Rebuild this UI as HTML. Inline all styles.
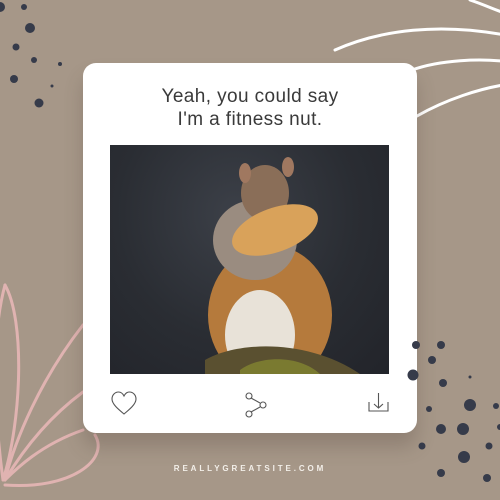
<!DOCTYPE html>
<html><head><style>
body{margin:0;width:500px;height:500px;background:#a69788;position:relative;overflow:hidden;font-family:"Liberation Sans",sans-serif}
svg.bg{position:absolute;left:0;top:0}
.card{position:absolute;left:83px;top:63px;width:334px;height:370px;background:#fff;border-radius:13px;box-shadow:0 14px 18px rgba(80,65,55,.25)}
.t{position:absolute;left:0;width:334px;top:22px;text-align:center;font-size:19px;line-height:23px;color:#3a3a3a;letter-spacing:0.4px}
.ph{position:absolute;left:27px;top:82px;width:279px;height:229px;background:radial-gradient(ellipse at 45% 30%,#3c4048 0%,#2a2d33 55%,#22242a 100%);overflow:hidden}
.foot{position:absolute;left:0;width:500px;text-align:center;font-size:8px;letter-spacing:2.9px;color:#f3efe9;font-weight:bold;top:464px}
</style></head><body>
<svg class="bg" width="500" height="500">
<g fill="none" stroke="#fff" stroke-width="3" stroke-linecap="round">
<path d="M335 50 C380 30 440 22 510 36"/>
<path d="M412 70 C440 60 480 58 510 62"/>
<path d="M417 116 C445 100 480 88 510 84"/>
<path d="M470 0 C485 5 495 10 510 15"/>
</g>
<g fill="none" stroke="#e0b3b1" stroke-width="3" stroke-linecap="round">
<path d="M5 285 C25 320 22 420 3 480"/>
<path d="M5 285 C-10 340 -5 420 3 480"/>
<path d="M83 325 C40 380 15 440 5 480"/>
<path d="M83 430 C40 445 15 470 5 480"/>
<path d="M95 435 C110 460 70 490 5 485"/>
<path d="M83 392 C45 420 20 455 5 480"/>
</g>
<g fill="#363b4a">
<circle cx="0" cy="7" r="5"/><circle cx="24" cy="7" r="3"/><circle cx="30" cy="28" r="5"/><circle cx="16" cy="47" r="3.5"/><circle cx="34" cy="60" r="3"/><circle cx="60" cy="64" r="2"/><circle cx="14" cy="79" r="4"/><circle cx="52" cy="86" r="1.5"/><circle cx="39" cy="103" r="4.5"/>
</g>
</svg>
<div class="card">
<div class="t">Yeah, you could say<br>I'm a fitness nut.</div>
<div class="ph">
<svg width="279" height="229">
<ellipse cx="160" cy="170" rx="62" ry="70" fill="#b57a3c"/>
<ellipse cx="150" cy="190" rx="35" ry="45" fill="#e8e2d8"/>
<ellipse cx="145" cy="95" rx="42" ry="40" fill="#9a8c80"/>
<ellipse cx="155" cy="48" rx="24" ry="28" fill="#8a6e58"/>
<ellipse cx="135" cy="28" rx="6" ry="10" fill="#a07860"/><ellipse cx="178" cy="22" rx="6" ry="10" fill="#a07860"/>
<ellipse cx="165" cy="85" rx="45" ry="22" fill="#d9a25a" transform="rotate(-20 165 85)"/>
<path d="M95 215 C130 195 200 195 250 229 L95 229Z" fill="#5a5030"/>
<path d="M130 225 C150 210 190 210 210 229 L130 229Z" fill="#7a7a30"/>
</svg>
</div>
<svg style="position:absolute;left:0;top:0" width="334" height="370" fill="none" stroke="#555" stroke-width="1.1">
<path d="M41 351 C35 346 29 341 29 336 C29 332 32 329 35.5 329 C38 329 40 331 41 333 C42 331 44 329 46.5 329 C50 329 53 332 53 336 C53 341 47 346 41 351Z"/>
<circle cx="166" cy="333" r="3"/><circle cx="180" cy="342" r="3"/><circle cx="166" cy="351" r="3"/>
<path d="M168 335 L177 340 M177 344 L168 349"/>
<path d="M286 339 V348 H305 V339 M295.5 330 V345 M291 341 L295.5 345 L300 341"/>
</svg>
</div>
<svg class="bg" width="500" height="500">
<g fill="#363b4a">
<circle cx="416" cy="345" r="4"/><circle cx="441" cy="345" r="4"/><circle cx="432" cy="360" r="4"/><circle cx="413" cy="375" r="5.5"/><circle cx="443" cy="383" r="4"/><circle cx="470" cy="377" r="1.5"/><circle cx="429" cy="409" r="3"/><circle cx="470" cy="405" r="6"/><circle cx="496" cy="406" r="3"/><circle cx="441" cy="429" r="5"/><circle cx="463" cy="429" r="6"/><circle cx="500" cy="427" r="3"/><circle cx="422" cy="446" r="3.5"/><circle cx="489" cy="446" r="3.5"/><circle cx="464" cy="457" r="6"/><circle cx="441" cy="473" r="4"/><circle cx="487" cy="478" r="4"/>
</g>
</svg>
<div class="foot">REALLYGREATSITE.COM</div>
</body></html>
